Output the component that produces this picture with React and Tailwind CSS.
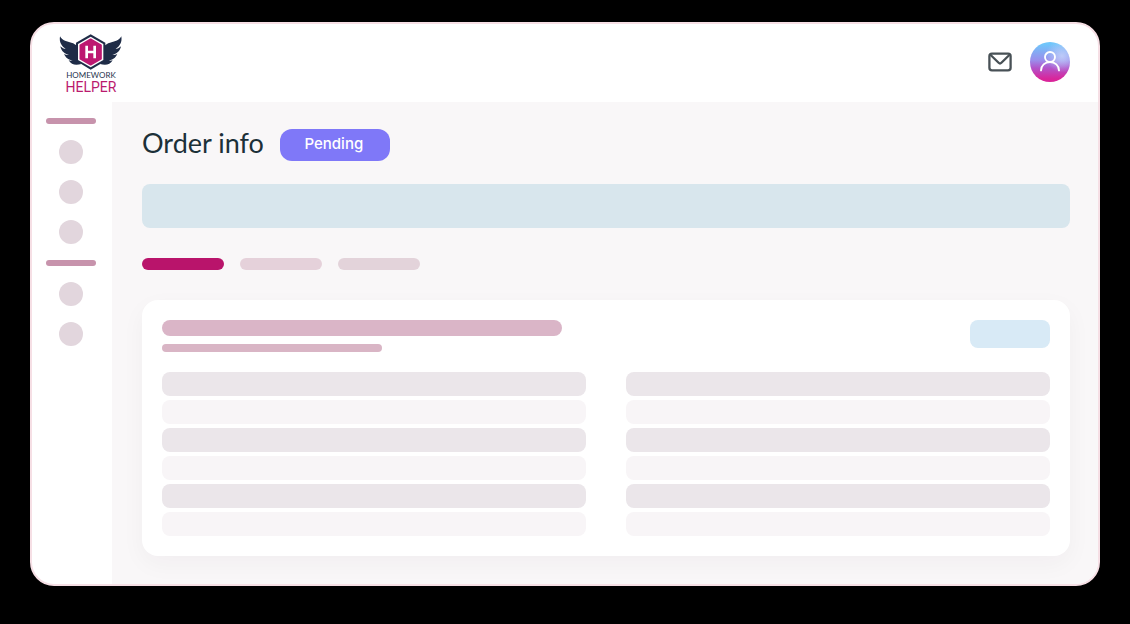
const rows = [0, 1, 2, 3, 4, 5];

function LogoMark() {
  const wing =
    "M120 80C127 93 142 96 154 99C162 101 167 105 171 109L171 150L184 163C168 168 154 166 146 152C151 154 155 154 158 152C147 151 137 145 132 132C138 136 143 137 147 136C134 133 124 125 121 110C126 115 132 118 137 118C125 110 117 98 120 80Z";
  return (
    <svg viewBox="117 73 192 108" className="h-9 w-16" aria-hidden="true">
      <g fill="#1f2c47">
        <path d={wing} />
        <path d={wing} transform="translate(424 0) scale(-1 1)" />
        <path d="M212 74L256 99V154L212 180L168 153V99Z" />
      </g>
      <path d="M212 81L250 103V151L212 173L174 151V103Z" fill="#fff" />
      <path
        d="M212 89L243 107V147L212 165L181 147V107Z"
        fill="#bd1871"
        stroke="#bd1871"
        strokeWidth="5"
        strokeLinejoin="round"
      />
      <path d="M200 108V146M224 108V146M200 127H224" stroke="#fff" strokeWidth="8" fill="none" />
    </svg>
  );
}

function Logo() {
  return (
    <a href="#" className="flex w-16 flex-col items-center">
      <LogoMark />
      <span className="font-['Lato',sans-serif] text-[8px] leading-[10px] text-[#26334d]">
        HOMEWORK
      </span>
      <span className="font-['Roboto',sans-serif] text-[14px] leading-[14px] text-[#ba1a6e]">
        HELPER
      </span>
    </a>
  );
}

function Header() {
  return (
    <header className="flex h-[78px] items-start justify-between pt-[10px] pr-7 pl-[27px]">
      <Logo />
      <div className="flex items-center gap-[18px] pt-2">
        <button type="button" aria-label="Messages" className="size-6">
          <svg
            viewBox="0 0 24 24"
            className="size-6"
            fill="none"
            stroke="#485156"
            strokeWidth="2.3"
            strokeLinecap="round"
            strokeLinejoin="round"
          >
            <rect x="1.4" y="3.6" width="21.2" height="16.8" rx="2.6" />
            <path d="M2.4 4.8L10.6 12.8Q12 14.2 13.4 12.8L21.6 4.8" />
          </svg>
        </button>
        <button
          type="button"
          aria-label="Profile"
          className="flex size-10 items-center justify-center rounded-full bg-[radial-gradient(circle_at_80%_35%,#c9d6fbcc,transparent_40%),linear-gradient(180deg,#6fc6fb_5%,#9a8fec_45%,#b254ca_65%,#d9259a_92%)]"
        >
          <svg
            viewBox="0 0 24 24"
            className="size-6"
            fill="none"
            stroke="#fff"
            strokeWidth="1.9"
            strokeLinecap="round"
          >
            <circle cx="12" cy="7" r="5" />
            <path d="M3 20.4C3 15.6 7 12 12 12S21 15.6 21 20.4" />
          </svg>
        </button>
      </div>
    </header>
  );
}

function Dot() {
  return <li className="size-6 rounded-full bg-[#e2d6dd]" />;
}

function Sidebar() {
  return (
    <nav aria-label="Main" className="flex w-20 shrink-0 flex-col items-center gap-4 pt-4 pr-[2px]">
      <div className="h-[6px] w-[50px] rounded-full bg-[#c793ac]" />
      <ul className="flex flex-col gap-4">
        <Dot />
        <Dot />
        <Dot />
      </ul>
      <div className="h-[6px] w-[50px] rounded-full bg-[#c793ac]" />
      <ul className="flex flex-col gap-4">
        <Dot />
        <Dot />
      </ul>
    </nav>
  );
}

function Column() {
  return (
    <div className="flex flex-1 flex-col gap-1">
      {rows.map((row) => (
        <div
          key={row}
          className={
            row % 2 === 0 ? "h-6 rounded-lg bg-[#ebe6ea]" : "h-6 rounded-lg bg-[#f8f5f7]"
          }
        />
      ))}
    </div>
  );
}

function OrderCard() {
  return (
    <section className="rounded-2xl bg-white p-5 shadow-[0_8px_24px_rgba(40,30,40,0.04)]">
      <div className="flex items-start justify-between">
        <div className="flex flex-col gap-2">
          <div className="h-4 w-[400px] rounded-full bg-[#dab5c7]" />
          <div className="h-2 w-[220px] rounded-full bg-[#d9b5c5]" />
        </div>
        <div className="h-7 w-20 rounded-lg bg-[#d8eaf6]" />
      </div>
      <div className="mt-5 flex gap-10">
        <Column />
        <Column />
      </div>
    </section>
  );
}

export default function App() {
  return (
    <div className="min-h-screen bg-black px-[30px] pt-[22px] pb-[38px]">
      <div className="overflow-hidden rounded-3xl border-2 border-[#f6dfe5] bg-white">
        <Header />
        <div className="flex">
          <Sidebar />
          <main className="min-w-0 flex-1 bg-[#f9f7f8] pt-[27px] pr-7 pb-7 pl-[30px]">
            <div className="flex h-8 items-center gap-4">
              <h1 className="pb-1 font-['Lato',sans-serif] text-[27px] leading-7 text-[#1c3038]">
                Order info
              </h1>
              <span className="flex h-8 w-[110px] items-center justify-center rounded-xl bg-[#7f78f8] pr-[2px] pb-[2px] font-['Inter',sans-serif] text-[15px] font-medium text-white">
                Pending
              </span>
            </div>
            <div className="mt-[23px] h-11 rounded-lg bg-[#d8e6ed]" />
            <div className="mt-[30px] mb-[30px] flex gap-4">
              <div className="h-3 w-[82px] rounded-full bg-[#b9146b]" />
              <div className="h-3 w-[82px] rounded-full bg-[#e5d1da]" />
              <div className="h-3 w-[82px] rounded-full bg-[#e3d3da]" />
            </div>
            <OrderCard />
          </main>
        </div>
      </div>
    </div>
  );
}
